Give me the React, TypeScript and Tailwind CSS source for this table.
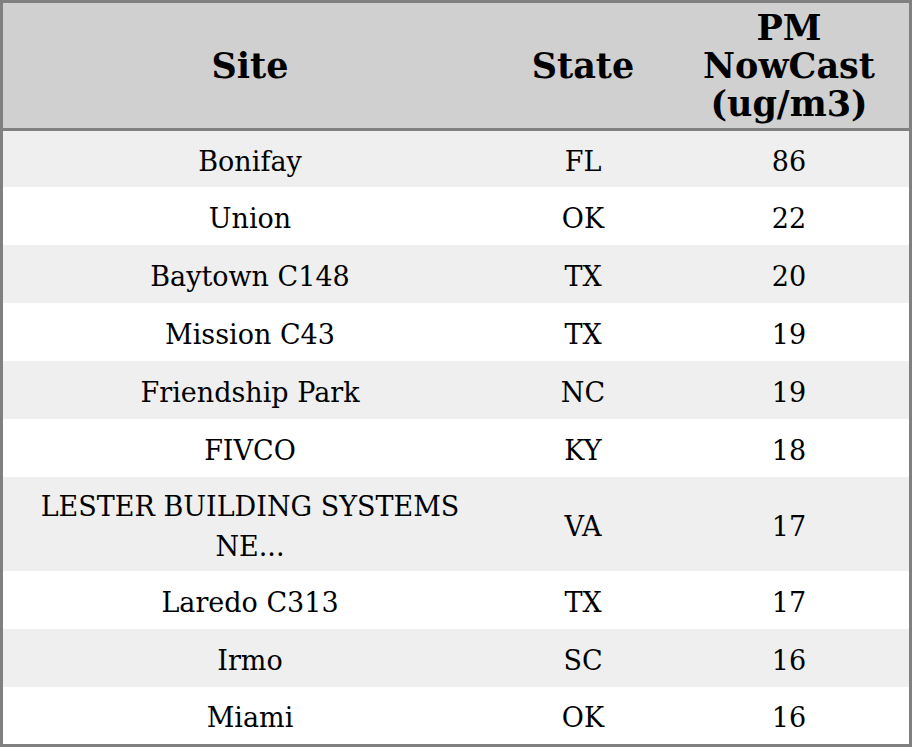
import React from "react";

const rows: { site: string[]; state: string; pm: string }[] = [
  { site: ["Bonifay"], state: "FL", pm: "86" },
  { site: ["Union"], state: "OK", pm: "22" },
  { site: ["Baytown C148"], state: "TX", pm: "20" },
  { site: ["Mission C43"], state: "TX", pm: "19" },
  { site: ["Friendship Park"], state: "NC", pm: "19" },
  { site: ["FIVCO"], state: "KY", pm: "18" },
  { site: ["LESTER BUILDING SYSTEMS", "NE..."], state: "VA", pm: "17" },
  { site: ["Laredo C313"], state: "TX", pm: "17" },
  { site: ["Irmo"], state: "SC", pm: "16" },
  { site: ["Miami"], state: "OK", pm: "16" },
];

export default function App() {
  return (
    <div
      className="w-[912px] h-[747px] bg-white text-black border-[3px] border-[#808080] flex flex-col"
      style={{ fontFamily: '"DejaVu Serif", serif' }}
    >
      <div className="grid grid-cols-[494px_172px_240px] h-[125px] bg-[#d0d0d0] border-b-[3px] border-[#808080] box-content font-bold text-[35px] leading-[38px]">
        <div className="flex items-center justify-center text-center">Site</div>
        <div className="flex items-center justify-center text-center">State</div>
        <div className="flex flex-col items-center justify-center text-center">
          <span>PM</span>
          <span>NowCast</span>
          <span>(ug/m3)</span>
        </div>
      </div>
      <div className="flex flex-col text-[27px] leading-[40px]">
        {rows.map((r, i) => {
          const h =
            i === 0 ? "h-[56px]" : r.site.length > 1 ? "h-[94px]" : i === rows.length - 1 ? "h-[57px]" : "h-[58px]";
          return (
            <div
              key={i}
              className={`grid grid-cols-[494px_172px_240px] pt-[5px] ${h} ${i % 2 === 0 ? "bg-[#efefef]" : "bg-white"}`}
            >
              <div className="flex flex-col items-center justify-center text-center">
                {r.site.map((s, j) => (
                  <span key={j}>{s}</span>
                ))}
              </div>
              <div className="flex items-center justify-center">{r.state}</div>
              <div className="flex items-center justify-center">{r.pm}</div>
            </div>
          );
        })}
      </div>
    </div>
  );
}
